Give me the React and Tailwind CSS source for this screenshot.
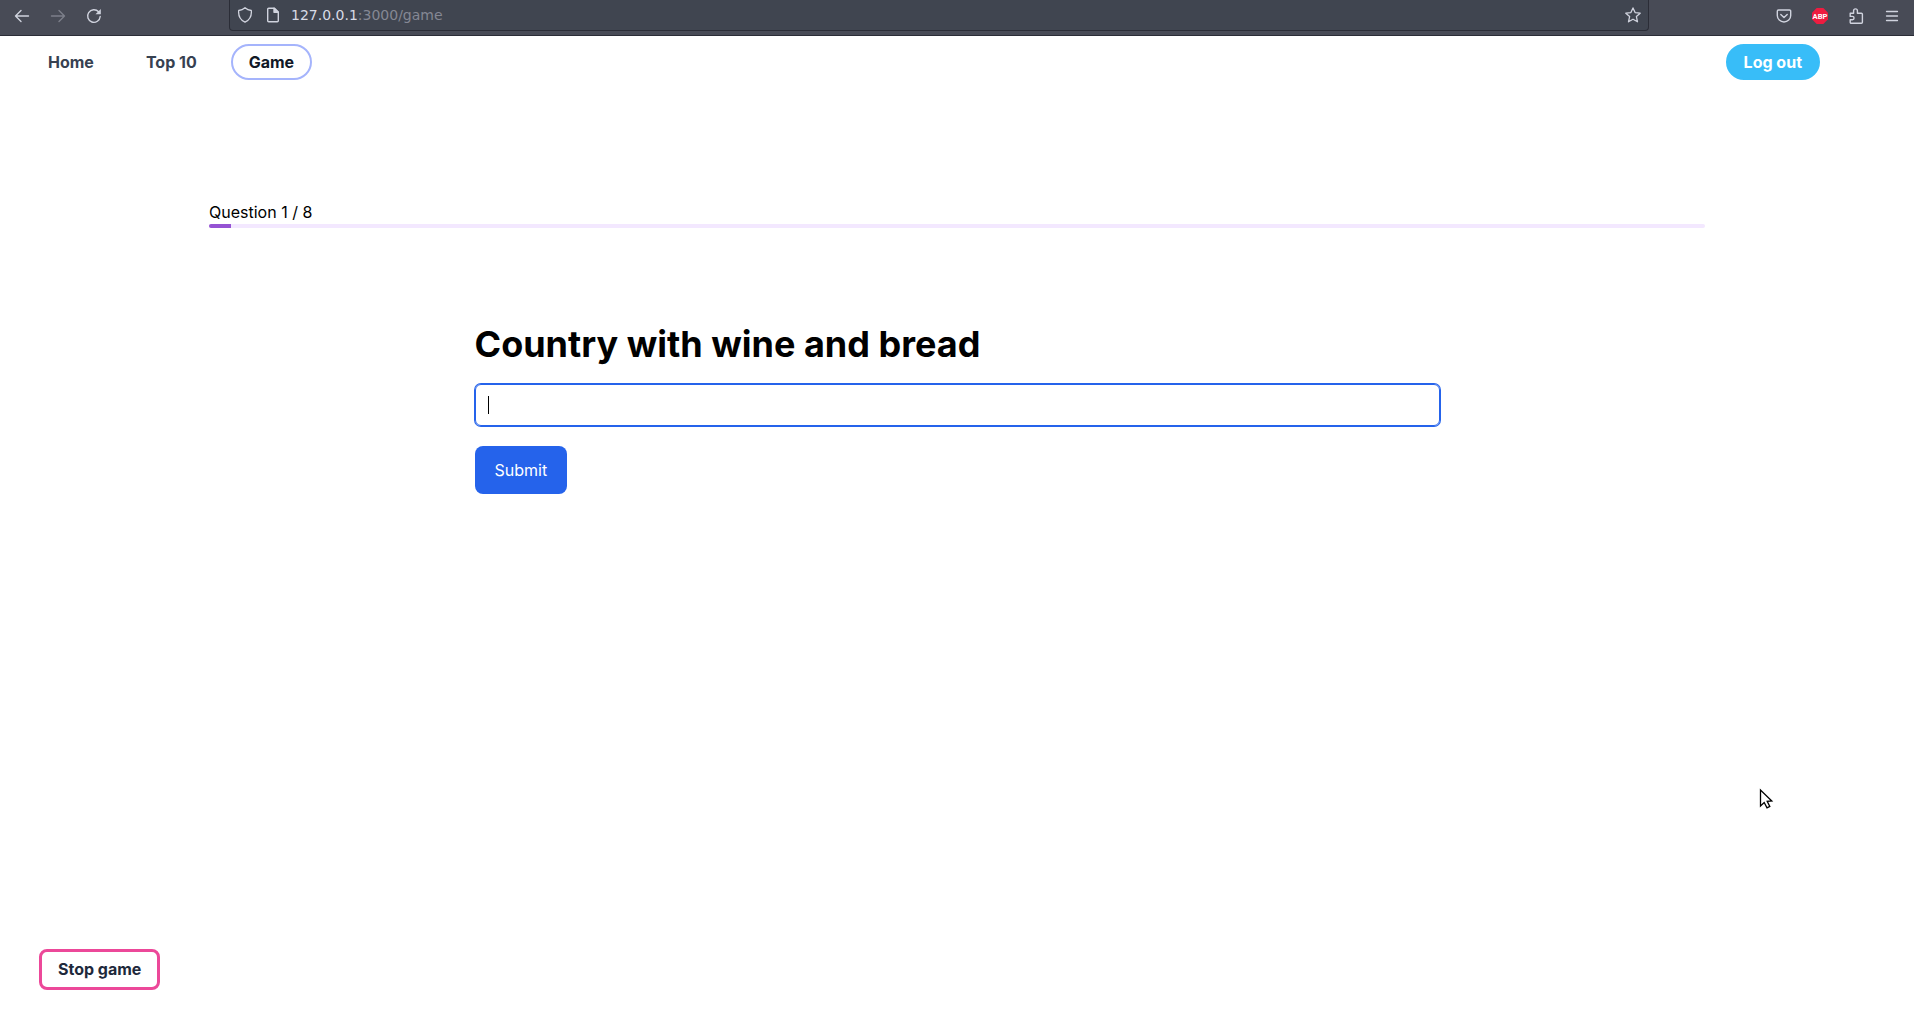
import React from "react";

const stroke = {
  fill: "none",
  stroke: "currentColor",
  strokeLinecap: "round",
  strokeLinejoin: "round",
};

function Icon({ children, width = 1.4 }) {
  return (
    <svg viewBox="0 0 16 16" className="size-4 shrink-0" strokeWidth={width} aria-hidden="true" {...stroke}>
      {children}
    </svg>
  );
}

function Toolbar() {
  return (
    <header className="flex h-9 items-start border-b border-[#2b2d37] bg-[#484b56] text-[#d0d3de]">
      <div className="flex h-8 w-[229px] shrink-0 items-center gap-5 pl-3.5">
        <button type="button" aria-label="Back">
          <Icon><path d="M1.500 8h13M7 2.500 1.500 8 7 13.500" /></Icon>
        </button>
        <button type="button" aria-label="Forward" className="text-[#7c7f8a]">
          <Icon><path d="M1.500 8h13M9 2.500 14.500 8 9 13.500" /></Icon>
        </button>
        <button type="button" aria-label="Reload">
          <Icon>
            <path d="M14.200 8.500A6.300 6.300 0 1 1 12.600 3.800" />
            <path d="M14.800 1v5.300H9.500z" fill="currentColor" stroke="none" />
          </Icon>
        </button>
      </div>
      <div className="flex h-[31px] grow items-center rounded-b border border-t-0 border-[#2b2d37] bg-[#404550] px-[7px]">
        <Icon width={1.3}><path d="M8 .8c1.600 1.400 3.800 2.400 6.300 2.700.5 4.800-.8 8.900-6.300 11.700C2.500 12.400 1.200 8.300 1.700 3.500 4.200 3.200 6.400 2.200 8 .8z" /></Icon>
        <span className="ml-3 flex">
          <Icon><path d="M9.500 1.200H3.700a1 1 0 0 0-1 1v11.600a1 1 0 0 0 1 1h8.600a1 1 0 0 0 1-1V5z" /><path d="M9 1.200v4.100h4.200z" fill="currentColor" /></Icon>
        </span>
        <div className="relative ml-2.5 h-5 grow font-['DejaVu_Sans',sans-serif] text-sm text-[#858894]">
          <input aria-label="Address" type="text" className="absolute inset-0 w-full bg-transparent outline-none" />
          <span className="pointer-events-none block"><span className="text-[#d8dbe6]">127.0.0.1</span>:3000/game</span>
        </div>
        <button type="button" aria-label="Bookmark">
          <Icon width={1.3}><path d="M8 .9l2.100 4.700 5.100.6-3.800 3.400 1.100 5.200L8 12.200l-4.500 2.600 1.100-5.200L.8 6.200l5.100-.6z" /></Icon>
        </button>
      </div>
      <div className="flex h-[31px] w-[265px] shrink-0 items-center justify-end gap-5 pr-3.5">
        <button type="button" aria-label="Save to Pocket">
          <Icon><path d="M2.500 2h11a1.200 1.200 0 0 1 1.200 1.200V7.500a6.700 6.500 0 0 1-13.400 0V3.200A1.200 1.200 0 0 1 2.500 2z" /><path d="M4.800 6.500 8 9.500l3.200-3" /></Icon>
        </button>
        <button type="button" aria-label="Adblock Plus">
          <svg viewBox="0 0 16 16" className="size-4" aria-hidden="true">
            <path d="M4.700 0h6.600L16 4.700v6.600L11.300 16H4.700L0 11.300V4.700z" fill="#ee1c40" />
            <text x="8" y="10.800" textAnchor="middle" fontSize="7.600" fontWeight="700" fill="white" fontFamily="Roboto, sans-serif">ABP</text>
          </svg>
        </button>
        <button type="button" aria-label="Extensions">
          <Icon><path d="M2.200 5.200h3.400V2.800a1.900 1.900 0 0 1 3.800 0v2.400h4a1 1 0 0 1 1 1v8a1 1 0 0 1-1 1H3.200a1 1 0 0 1-1-1v-2.500h2.200a1.600 1.600 0 0 0 0-3.300H2.200z" /></Icon>
        </button>
        <button type="button" aria-label="Menu">
          <Icon width={1.3}><path d="M2.500 3.500h11M2.500 8h11M2.500 12.500h11" /></Icon>
        </button>
      </div>
    </header>
  );
}

function NavItem({ href, active, children }) {
  return (
    <a
      href={href}
      aria-current={active ? "page" : undefined}
      className={
        active
          ? "rounded-full border-2 border-[#a5b4fc] px-4 py-1 text-[#111827]"
          : "rounded-full border-2 border-transparent px-4 py-1 text-[#374151]"
      }
    >
      {children}
    </a>
  );
}

export default function App() {
  return (
    <div className="relative flex min-h-screen flex-col bg-white font-['Inter',sans-serif] text-base text-black">
      <Toolbar />
      <nav className="flex items-center justify-between pt-2 pr-[94px] pl-[30px] font-bold">
        <div className="flex gap-4">
          <NavItem href="#home">Home</NavItem>
          <NavItem href="#top">Top 10</NavItem>
          <NavItem href="#game" active>Game</NavItem>
        </div>
        <button type="button" className="rounded-full border-2 border-[#38bdf8] bg-[#38bdf8] px-4 py-1 text-white">
          Log out
        </button>
      </nav>
      <main className="mx-auto w-full max-w-[1536px] grow px-5 pt-[120px]">
        <p id="progress-label">Question 1 / 8</p>
        <div
          role="progressbar"
          aria-labelledby="progress-label"
          aria-valuenow={1}
          aria-valuemax={8}
          className="h-1 overflow-hidden rounded-sm bg-[#f3e8ff]"
        >
          <div className="h-full w-[22px] bg-[#9553d3]" />
        </div>
        <form className="mx-auto mt-24 flex w-full max-w-[965px] flex-col items-start gap-5" onSubmit={(e) => e.preventDefault()}>
          <label htmlFor="answer" className="text-4xl font-bold">Country with wine and bread</label>
          <div className="relative w-full">
            <input
              id="answer"
              type="text"
              className="block h-[42px] w-full rounded-md border border-[#2563eb] px-3 text-sm caret-transparent ring-1 ring-[#2563eb] outline-none"
            />
            <span className="pointer-events-none absolute inset-y-3 left-[13px] w-px bg-black" />
          </div>
          <button type="submit" className="rounded-lg bg-[#2563eb] px-5 py-3 text-white">Submit</button>
        </form>
      </main>
      <footer className="px-[39px] pb-9">
        <button type="button" className="rounded-lg border-3 border-[#ec4899] px-4 pt-[5px] pb-1.5 font-bold text-[#1e293b]">
          Stop game
        </button>
      </footer>
      <svg viewBox="0 0 16 24" className="pointer-events-none absolute top-[788px] left-[1759px] h-6 w-4" aria-hidden="true">
        <path d="M1.500 2v16l3.700-3.500 2.800 5.300 2.800-1.400-2.600-5 4.600-.4z" fill="white" stroke="black" strokeWidth="1.300" />
      </svg>
    </div>
  );
}
